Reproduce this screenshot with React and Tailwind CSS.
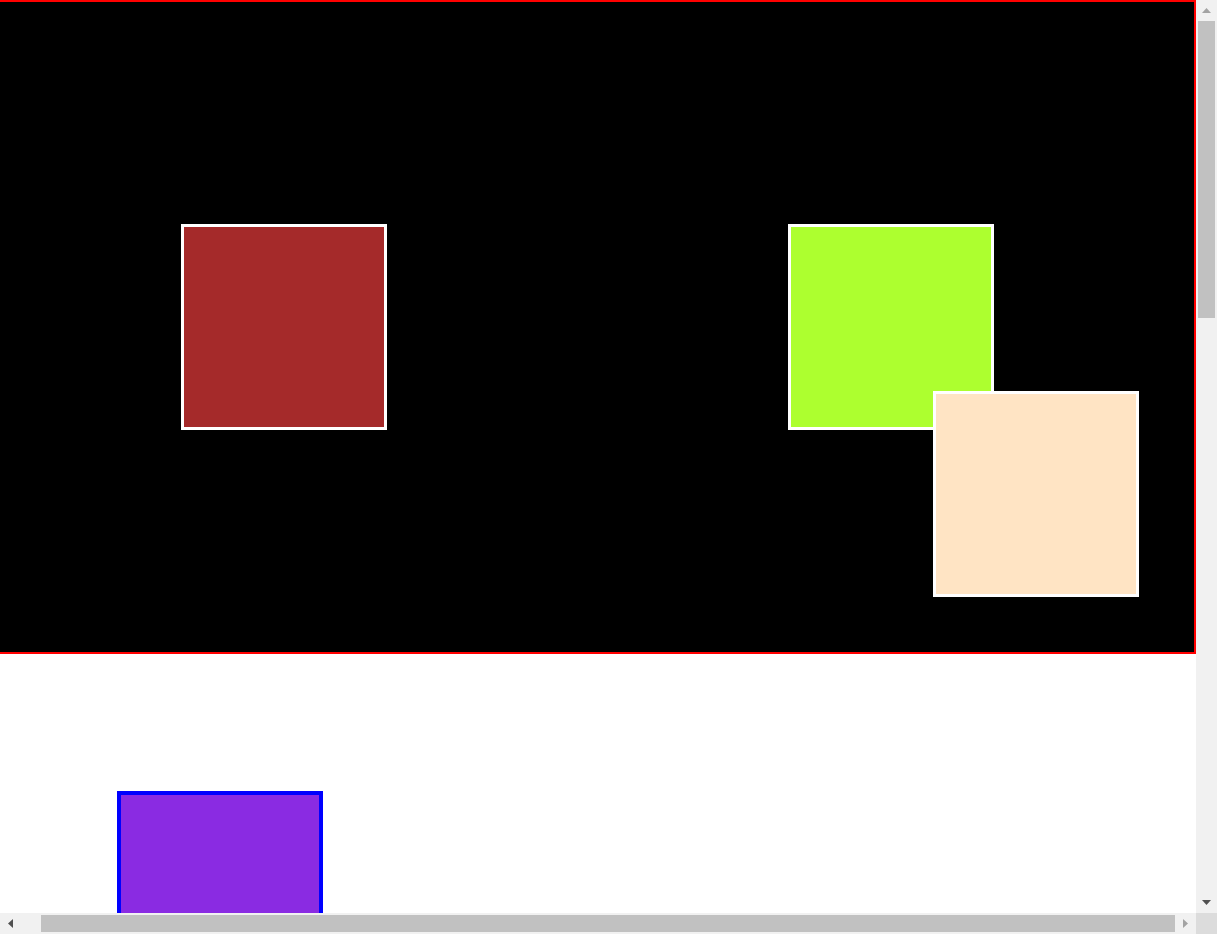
// free canvas: squares sit at their own spots on the stage
const squares = [
  { left: 181, top: 224, cls: 'bg-[#a52a2a]' },
  { left: 788, top: 224, cls: 'bg-[#adff2f]' },
  { left: 933, top: 391, cls: 'bg-[#ffe4c4]' },
]

function Arrow({ dir, dim }) {
  const pts = {
    up: '0,5 4.5,0 9,5',
    down: '0,0 9,0 4.5,5',
    left: '5,0 5,9 0,4.5',
    right: '0,0 0,9 5,4.5',
  }[dir]
  const vertical = dir === 'up' || dir === 'down'
  return (
    <svg width={vertical ? 9 : 5} height={vertical ? 5 : 9} viewBox={vertical ? '0 0 9 5' : '0 0 5 9'}>
      <polygon points={pts} fill={dim ? '#a3a3a3' : '#505050'} />
    </svg>
  )
}

export default function App() {
  return (
    <div className="w-[1217px] h-[934px] flex flex-col overflow-hidden bg-white">
      <div className="flex h-[913px]">
        <div className="w-[1196px] h-[913px] overflow-hidden">
          <div className="relative h-[654px] bg-black border-t-2 border-r-2 border-b-2 border-[#ff0000]">
            {squares.map((s, i) => (
              <div
                key={i}
                className={`absolute w-[206px] h-[206px] border-[3px] border-white ${s.cls}`}
                style={{ left: s.left, top: s.top - 2 }}
              />
            ))}
          </div>
          <div className="ml-[117px] mt-[137px] w-[206px] h-[206px] bg-[#8a2be2] border-4 border-[#0000ff]" />
        </div>

        {/* vertical scrollbar */}
        <div className="w-[21px] h-[913px] bg-[#f1f1f1] flex flex-col items-center">
          <div className="h-[21px] flex items-center justify-center">
            <Arrow dir="up" dim />
          </div>
          <div className="w-[17px] h-[297px] bg-[#c1c1c1]" />
          <div className="flex-1" />
          <div className="h-[21px] flex items-center justify-center">
            <Arrow dir="down" />
          </div>
        </div>
      </div>

      {/* horizontal scrollbar */}
      <div className="flex h-[21px]">
        <div className="w-[1196px] bg-[#f1f1f1] flex items-center">
          <div className="w-[21px] flex items-center justify-center">
            <Arrow dir="left" />
          </div>
          <div className="ml-[20px] w-[1134px] h-[17px] bg-[#c1c1c1]" />
          <div className="flex-1 flex items-center justify-center">
            <Arrow dir="right" dim />
          </div>
        </div>
        <div className="w-[21px] bg-[#dcdcdc]" />
      </div>
    </div>
  )
}
